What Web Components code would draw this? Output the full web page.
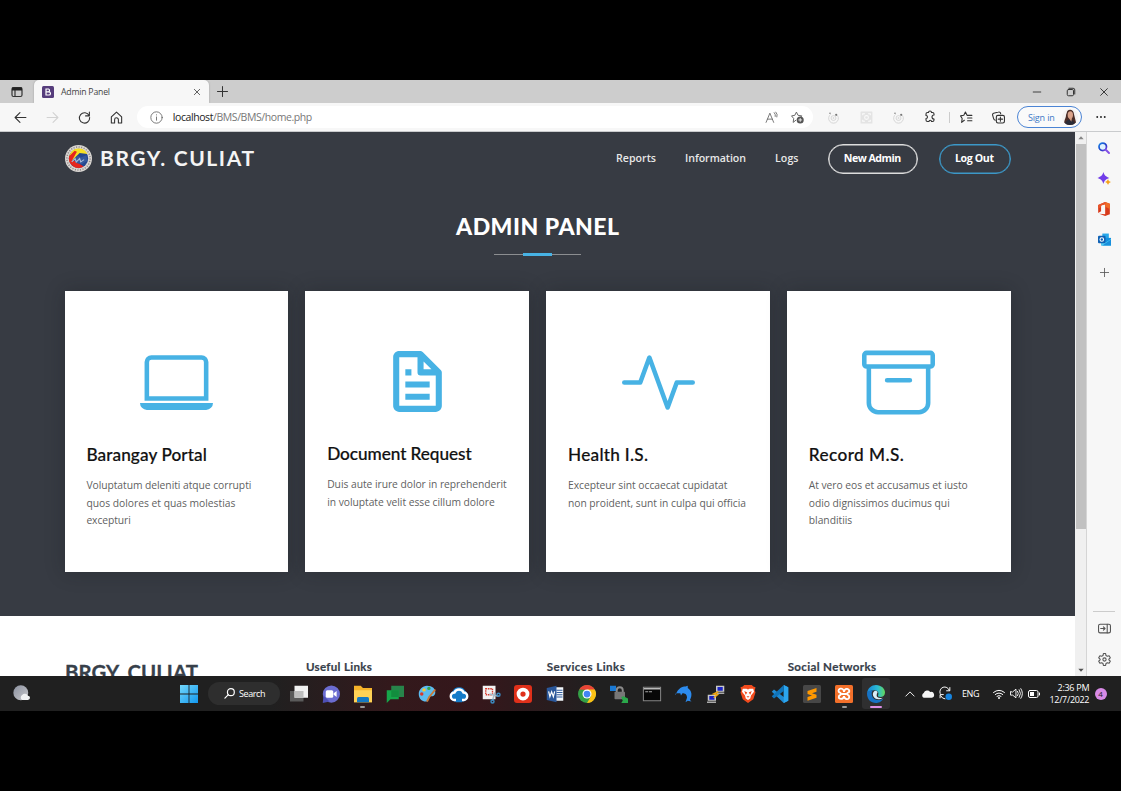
<!DOCTYPE html>
<html lang="en">
<head>
<meta charset="utf-8">
<title>Admin Panel</title>
<style>
html,body{margin:0;height:791px;overflow:hidden;background:#000}
body{font-family:"Open Sans","Noto Sans",sans-serif}
</style>
</head>
<body>
<desktop-screen></desktop-screen>
<script>
const define=(name,html,init)=>{
  const t=document.createElement('template');
  t.innerHTML=html;
  customElements.define(name,class extends HTMLElement{
    connectedCallback(){
      if(this.shadowRoot)return;
      this.attachShadow({mode:'open'}).append(t.content.cloneNode(true));
      if(init)init.call(this,this.shadowRoot);
    }
  });
};

/* One line of text tracked so that it fills the width given in "w". */
define('fit-text','<style>:host{display:block;white-space:nowrap}span{display:inline-block}</style><span><slot></slot></span>',function(root){
  const s=root.querySelector('span'),w=+this.getAttribute('w'),n=this.textContent.trim().length;
  const track=(w-s.getBoundingClientRect().width)/(n-1);
  s.style.letterSpacing=track+'px';
  s.style.marginRight=-track+'px';
});

const line=(d,w=1.5)=>`<g fill="none" stroke="currentColor" stroke-width="${w}" stroke-linecap="round" stroke-linejoin="round">${d}</g>`;
const ghost='<g fill="none" stroke="#d2d2d2" stroke-width="1.6"><path d="M7 6a9 9 0 1 0 10 0"/><circle cx="12" cy="13" r="4.5"/><circle cx="12" cy="13" r="1" /></g><g fill="#777"><circle cx="5.5" cy="4" r="1.4"/><circle cx="17" cy="7" r="2"/></g>';
const icons={
 tabs:line('<rect x="2" y="3" width="20" height="18" rx="3"/><path d="M8 9v12"/>',2.4)+'<path d="M2 3h20v6H2z" fill="#222"/>',
 boot:'<rect width="24" height="24" rx="3" fill="#563d7c"/><path d="M8 6h5a3 3 0 0 1 0 5.7H8zm0 5.7h5.8a3.1 3.1 0 0 1 0 6.3H8z" fill="none" stroke="#fff" stroke-width="2.4"/>',
 x:line('<path d="M4 4l16 16M20 4L4 20"/>',2.3),
 plus:line('<path d="M12 1v22M1 12h22"/>',2.2),
 min:line('<path d="M3 12h18"/>',2.2),
 restore:line('<rect x="3" y="6" width="15" height="15" rx="3"/><path d="M7 3h10a4 4 0 0 1 4 4v10"/>',2.4),
 back:line('<path d="M22 12H2M11 3l-9 9 9 9"/>',2),
 fwd:line('<path d="M2 12h20M13 3l9 9-9 9"/>',2),
 reload:line('<path d="M20.5 8.500A9.500 9.500 0 1 0 21.500 12M21 2v7h-7"/>',2),
 home:line('<path d="M2.500 11L12 2l9.500 9v11h-6v-6a3.500 3.500 0 0 0-7 0v6h-6z"/>',2),
 info:line('<circle cx="12" cy="12" r="10.500"/><path d="M12 11v6M12 7v.3"/>',1.600),
 read:line('<path d="M2 21L9 4l7 17M4.500 15h9M17 3q3 3 2 7M20 2q4 4 2 9"/>',1.600),
 staradd:line('<path d="M9 17l-5 4 1-7-4-5 6-1 3-6 3 6 7 1-2 2"/>',1.8)+'<circle cx="17" cy="16.500" r="6.500" fill="#555"/><path d="M17 13v7M13.500 16.500h7" stroke="#fff" stroke-width="1.500"/>',
 ghost,
 ghostbox:'<rect x="1" y="1" width="22" height="22" rx="1" fill="#e4e4e4"/><g fill="none" stroke="#fafafa" stroke-width="2"><circle cx="12" cy="12" r="3.500"/><path d="M5 8V5h4M15 5h4v3M5 16v3h4M15 19h4v-3"/></g>',
 puzzle:line('<path d="M20 8V6a3 3 0 0 0-3-3h-2a3 3 0 0 0-6 0H7a3 3 0 0 0-3 3v3a3 3 0 0 1 0 6v3a3 3 0 0 0 3 3h3a2.500 2.500 0 0 1 5 0h2a3 3 0 0 0 3-3v-2a4 4 0 1 1 0-8z"/>',2.200),
 favs:line('<path d="M8 17l-5 4 1-7-3-5 6-1 3-6 3 6h9M14 13h8M14 18h8"/>',2),
 coll:line('<rect x="8" y="8" width="15" height="14" rx="3"/><path d="M15.500 11v8M11.500 15h8M6 17a4 4 0 0 1-3-3L1 7a3 3 0 0 1 2-3l9-2a3 3 0 0 1 4 3"/>',2),
 dots:'<g fill="#222"><circle cx="3" cy="12" r="2.300"/><circle cx="12" cy="12" r="2.300"/><circle cx="21" cy="12" r="2.300"/></g>',
 avatar:'<defs><clipPath id="a"><circle cx="12" cy="12" r="12"/></clipPath></defs><g clip-path="url(#a)"><path fill="#f4f2f1" d="M0 0h24v24H0z"/><path d="M8 3c4-4 10-1 10 5l4 16H3C3 16 6 14 6 9z" fill="#4b2d27"/><ellipse cx="12.500" cy="9" rx="4" ry="5.500" fill="#dba38a"/><path d="M4 24c1-6 4-8 8-8s7 3 8 8z" fill="#2a2b36"/><path d="M10 13h5l-1 6z" fill="#d39a80"/></g>',
 search:'<defs><linearGradient id="s" x2="1" y2="1"><stop stop-color="#1c8be8"/><stop offset=".6" stop-color="#1f35c5"/><stop offset="1" stop-color="#8a4be8"/></linearGradient></defs><circle cx="9.500" cy="9.500" r="7.500" fill="#dff3ff" stroke="url(#s)" stroke-width="3.500"/><path d="M16 16l6 6" stroke="#8450e6" stroke-width="4" stroke-linecap="round"/>',
 spark:'<path d="M10 0c2 7 4 8 11 11-7 3-9 4-11 11C8 15 6 14-1 11c7-3 9-4 11-11z" fill="#713de8"/><path d="M18.500 13c1 4 2 4 5.500 5.500-3 1-4 2-5.500 5.500-1-3-2-4-5.500-5.500 3-1 4-2 5.500-5.500z" fill="#f6a21b"/>',
 office:'<path d="M14 0l8 3v18l-8 3-10-4 10 1V4L7 6v10l-5 3V5z" fill="#d83b1c"/><path d="M14 0l8 3v9l-8-4z" fill="#f06b27"/><path d="M14 0L2 5v7l5-4V6l7-2z" fill="#e8562b"/>',
 outlook:'<path d="M8 1h12v10H8z" fill="#28a8ea"/><path d="M6 9h18v14H6z" fill="#1490df"/><path d="M6 11l9 6 9-6v12H6z" fill="#50d0f5"/><path d="M24 12v11H8z" fill="#188fdc"/><rect x="0" y="5" width="14" height="14" rx="2" fill="#0f62b5"/><circle cx="7" cy="12" r="3.300" fill="none" stroke="#fff" stroke-width="2"/>',
 panel:line('<rect x="1" y="4" width="22" height="16" rx="3"/><path d="M17 4v16M5 12h8M10 9l3 3-3 3"/>',2),
 gear:line('<circle cx="12" cy="12" r="3"/><path d="M10 1h4l.8 3.700 2.400 1.300 3.300-.9 2.200 3.800-2.600 2.500v1.200l2.600 2.500-2.200 3.800-3.300-.9-2.400 1.300L14 23h-4l-.8-3.700-2.400-1.300-3.300.9-2.200-3.800 2.600-2.500v-1.200L1.300 8.900l2.200-3.800 3.300.9 2.400-1.300z"/>',2),
 weather:'<defs><linearGradient id="m" x2="1" y2="1"><stop stop-color="#8b91a0"/><stop offset="1" stop-color="#c8c8ca"/></linearGradient></defs><circle cx="11" cy="11" r="10.500" fill="url(#m)"/><path d="M13 21a4 4 0 0 1 0-7 5 5 0 0 1 8 1 3 3 0 0 1 0 6z" fill="#f1f2f3"/>',
 win:'<defs><linearGradient id="w" x2="1" y2="1"><stop stop-color="#73d8fb"/><stop offset="1" stop-color="#1297ef"/></linearGradient></defs><path d="M0 0h11.400v11.400H0zM12.600 0H24v11.400H12.600zM0 12.600h11.400V24H0zM12.600 12.600H24V24H12.600z" fill="url(#w)"/>',
 lens:line('<circle cx="15" cy="9" r="7.500"/><path d="M9.500 14.500L2 22"/>',2.600),
 task:'<path d="M0 8h18v14H0z" fill="#5a5a5a"/><path d="M6 1h18v16H6z" fill="#f1f1f1"/><path d="M6 8h12v9H6z" fill="#bdbdbd"/>',
 chat:'<circle cx="12.500" cy="12" r="11.500" fill="#6b6cd0"/><path d="M1 24l1-10 8 8z" fill="#4e50b5"/><rect x="5" y="7" width="10" height="10" rx="2" fill="#fff"/><path d="M15.500 11l4-3v8l-4-3z" fill="#fff"/>',
 folder:'<path d="M0 1h9l3 3h12v19H0z" fill="#f6b32a"/><path d="M0 7h24v16H0z" fill="#ffd256"/><path d="M4 23v-5a2 2 0 0 1 2-2h12a2 2 0 0 1 2 2v5z" fill="#1479c4"/>',
 gchat:'<path d="M7 1h17v15H7z" fill="#27844a"/><path d="M1 7h16v12H6l-5 5z" fill="#16a64a"/><path d="M7 7h10v9H7z" fill="#128d3e"/>',
 paint:'<path d="M12 1c7 0 12 4 11 10-1 5-5 4-7 4-3 0-1 4-3 6C10 24 1 21 1 12 1 6 6 1 12 1z" fill="#5dbcf0"/><circle cx="5" cy="12" r="2.300" fill="#d8392c"/><circle cx="8" cy="6.500" r="2.300" fill="#f6c832"/><circle cx="14.500" cy="4.500" r="2.200" fill="#32a64a"/><path d="M23 6l-8 10-3 6" fill="none" stroke="#c97b39" stroke-width="2.500"/>',
 cloudhome:'<path d="M6 19a5 5 0 0 1 0-9 6.500 6.500 0 0 1 12 0 5 5 0 0 1 0 9z" fill="#1683d5" stroke="#1683d5" stroke-width="6" stroke-linejoin="round"/><path d="M6 20a5 5 0 0 1 0-10 6.500 6.500 0 0 1 12 0 5 5 0 0 1 0 10z" fill="#147bc8" stroke="#fff" stroke-width="3.200"/><path d="M8 23v-6l4-3 4 3v6z" fill="#147bc8"/>',
 snip:'<rect x="1" y="1" width="17" height="18" fill="#f2f2f2"/><rect x="5" y="5" width="9" height="8" fill="none" stroke="#d7392d" stroke-width="1.800" stroke-dasharray="2 1"/><path d="M10 12l12 3M17 10l-3 11" stroke="#a9bac7" stroke-width="2"/><g fill="none" stroke="#3b89bf" stroke-width="2"><circle cx="22" cy="13" r="2"/><circle cx="14" cy="22" r="2"/></g>',
 rec:'<rect width="24" height="24" rx="4" fill="#e0301a"/><circle cx="12" cy="12" r="6" fill="none" stroke="#fff" stroke-width="5"/>',
 word:'<path d="M11 3h12v18H11z" fill="#f4f8fd"/><path d="M14 7h8M14 10h8M14 13h8M14 16h8" stroke="#2b579a" stroke-width="1.300"/><path d="M1 4l13-3v22L1 20z" fill="#2b579a"/><path d="M3.500 8.500l1.700 7L7.500 9l2.300 6.500 1.800-7" fill="none" stroke="#fff" stroke-width="1.600"/>',
 chrome:'<circle cx="12" cy="12" r="12" fill="#34a046"/><path d="M1.600 6A12 12 0 0 1 22.400 6L12 12z" fill="#ea4335"/><path d="M12 6h10.400A12 12 0 0 1 12 24l5.200-9z" fill="#fbc116"/><path d="M12 6.500L1.600 6l5.200 9z" fill="#34a046"/><circle cx="12" cy="12" r="6" fill="#fff"/><circle cx="12" cy="12" r="4.500" fill="#4285f4"/>',
 lock:'<path d="M0 1h8v7H0z" fill="#1a79d3"/><path d="M9 11V7a4 4 0 0 1 8 0v4" fill="none" stroke="#8b8b8b" stroke-width="2.500"/><rect x="6" y="9" width="14" height="10" rx="1" fill="#777"/><path d="M15 16l3-1 6 3v6h-9l2-3z" fill="#2aa84b"/>',
 term:'<rect x=".5" y="3" width="23" height="18" fill="#080808" stroke="#8a8a8a" stroke-width="1.300"/><path d="M1 4h22v2H1z" fill="#bbb"/><path d="M3 9h4M8 9h4" stroke="#bbb" stroke-width="1.200"/>',
 dolphin:'<path d="M1 13C4 4 10 2 14 2l3-1v3c6 4 6 10 3 16l2 2-5-1-3 2 2-6c0-5-3-6-6-6l-2 3-1-3c-3 0-5 0-7 1z" fill="#2c8bee"/>',
 putty:'<path d="M12 1h11v8H12zM1 13h11v8H1z" fill="#c9c9c9"/><path d="M14 2.500h7v5h-7zM3 14.500h7v5H3z" fill="#1b24c4"/><path d="M13 10h10v2H13zM0 22h12v2H0z" fill="#aaa"/><path d="M15 9l-6 3 5 1-5 4" fill="none" stroke="#f0a814" stroke-width="2"/>',
 brave:'<path d="M7 0h10l2 2 3 1-1 4 1 3-3 9-7 5-7-5-3-9 1-3-1-4 3-1z" fill="#f24b1d"/><path d="M5 5h5l2 1 2-1h5l1 4-4 5-1 4-3 2-3-2-1-4-4-5z" fill="#fff"/><path d="M7 8l4 2-2 3zM17 8l-4 2 2 3zM10 15h4l-2 2z" fill="#f24b1d"/>',
 vscode:'<path d="M17 0l6 3v18l-6 3L1 9l3-3 13 10z" fill="#1f8ad2"/><path d="M17 0l6 3v18l-6 3z" fill="#2ba5ee"/><path d="M17 8L4 18l-3-3L17 0z" fill="#0f74ba"/>',
 sublime:'<rect width="24" height="24" rx="2" fill="#474747"/><path d="M6 8l12-4v5l-6 2 6 2v4L6 21v-5l6-2-6-2z" fill="#ff9800"/>',
 xampp:'<rect width="24" height="24" rx="2" fill="#f3702a"/><path d="M12 9C11 2 3 5 5 9c2 2 3 1 3 3s-3 1-3 4 6 4 7-1c1 5 7 5 7 1s-3-2-3-4 1-1 3-3c1-4-6-6-7 0zM9 12h6" fill="none" stroke="#fff" stroke-width="2.400"/>',
 edge:'<defs><linearGradient id="e" x2="1"><stop stop-color="#1685d8"/><stop offset=".6" stop-color="#2cbdd4"/><stop offset="1" stop-color="#64d958"/></linearGradient></defs><path d="M0 11C1 4 6 0 12 0c7 0 12 5 12 10 0 4-3 6-6 6s-4-1-3-3c1-3-1-6-5-6-5 0-9 2-10 4z" fill="url(#e)"/><path d="M0 11c1-3 4-4 8-4-3 3-2 9 2 12 4 2 8 1 12-1-3 5-7 6-10 6C5 24 0 19 0 11z" fill="#1672c4"/><path d="M10 8c-3 2-3 7 1 10 4 2 7 1 10-1-6 1-9-1-8-4 0-2 1-2 1-3 0-2-2-3-4-2z" fill="#d9edf7"/>',
 up:line('<path d="M2 17L12 7l10 10"/>',2.200),
 cloud:'<path d="M5 20a5 5 0 0 1 0-9 7 7 0 0 1 12-2 5.500 5.500 0 0 1 3 11z" fill="#f5f5f5"/>',
 sync:line('<path d="M2 12A9 9 0 0 1 19 6M20 1v6h-6M2 20v-6h6M3 16q3 6 8 6"/>',1.800)+'<circle cx="18" cy="18" r="6" fill="#1684df"/>',
 wifi:line('<path d="M1 9q11-9 22 0M4.500 13q7.500-6 15 0M8 16.500q4-3 8 0"/>',2)+'<circle cx="12" cy="20" r="2" fill="#fff"/>',
 vol:line('<path d="M1 9v6h4l6 5V4L5 9zM14 8q3 4 0 8M17 5q5 7 0 14M20 3q6 9 0 18"/>',1.700),
 batt:line('<rect x="1" y="5" width="19" height="14" rx="3"/><path d="M23 10v4"/>',2)+'<path d="M4 8h8v8H4z" fill="#fff"/>',
 tri:'<path d="M4 16l8-9 8 9z" fill="#858585"/>',
 trid:'<path d="M4 8l8 9 8-9z" fill="#505050"/>',
 seal:'<circle cx="12" cy="12" r="12" fill="#d9d6d2"/><circle cx="12" cy="12" r="10.300" fill="none" stroke="#8d8587" stroke-width="1.300" stroke-dasharray="1 1.300"/><circle cx="12" cy="12" r="8.600" fill="#24468f"/><path d="M4 9a8.600 8.600 0 0 1 16-1l-7-1-6 6-3 2z" fill="#f7df23"/><path d="M3.600 10l5-5 2 1-4 7 5 3 5 3a8.600 8.600 0 0 1-13-9z" fill="#e5251d"/><path d="M8 13l3-4 3 2 5-2 1 5-5 3-5-1z" fill="#34589c"/><path d="M6 15l3-3 1 3 3-3 1 3 3-2" stroke="#a9b9d6" fill="none"/>'
};
const big={
 laptop:[16,'M13.500 3a.5.5 0 0 1 .5.5V11H2V3.500a.5.5 0 0 1 .5-.5h11zm-11-1A1.500 1.500 0 0 0 1 3.500V12h14V3.500A1.500 1.500 0 0 0 13.500 2h-11zM0 12.500h16a1.500 1.500 0 0 1-1.500 1.500h-13A1.500 1.500 0 0 1 0 12.500z'],
 file:[24,'M19.903 8.586a.997.997 0 0 0-.196-.293l-6-6a.997.997 0 0 0-.293-.196c-.03-.014-.062-.022-.094-.033a.991.991 0 0 0-.259-.051C13.04 2.011 13.021 2 13 2H6c-1.103 0-2 .897-2 2v16c0 1.103.897 2 2 2h12c1.103 0 2-.897 2-2V9c0-.021-.011-.04-.013-.062a.952.952 0 0 0-.051-.259c-.01-.032-.019-.063-.033-.093zM16.586 8H14V5.414L16.586 8zM6 20V4h6v5a1 1 0 0 0 1 1h5l.002 10H6zM8 12h8v2H8zm0 4h8v2H8zm0-8h2v2H8z'],
 pulse:[16,'M6 2a.5.5 0 0 1 .47.33L10 12.036l1.530-4.208A.5.5 0 0 1 12 7.500h3.500a.5.5 0 0 1 0 1h-3.150l-1.880 5.170a.5.5 0 0 1-.94 0L6 3.964 4.470 8.171A.5.5 0 0 1 4 8.500H.5a.5.5 0 0 1 0-1h3.150l1.880-5.170A.5.5 0 0 1 6 2Z'],
 archive:[16,'M0 2a1 1 0 0 1 1-1h14a1 1 0 0 1 1 1v2a1 1 0 0 1-1 1v7.500a2.500 2.500 0 0 1-2.500 2.500h-9A2.500 2.500 0 0 1 1 12.500V5a1 1 0 0 1-1-1V2zm2 3v7.500A1.500 1.500 0 0 0 3.500 14h9a1.500 1.500 0 0 0 1.500-1.500V5H2zm13-3H1v2h14V2zM5 7.500a.5.5 0 0 1 .5-.5h5a.5.5 0 0 1 0 1h-5a.5.5 0 0 1-.5-.5z']
};
define('ui-icon','<style>:host{display:block;flex:none}svg{display:block;overflow:visible}</style><svg></svg>',function(root){
  const n=this.getAttribute('name'),s=this.getAttribute('size')||13,svg=root.querySelector('svg'),b=big[n];
  svg.setAttribute('width',s);svg.setAttribute('height',s);
  svg.setAttribute('viewBox',b?`0 0 ${b[0]} ${b[0]}`:'0 0 24 24');
  svg.innerHTML=b?`<path fill="currentColor" fill-rule="evenodd" d="${b[1]}"/>`:icons[n];
});

define('tab-strip',`<style>
:host{display:flex;height:23px;background:#cdcdcd;align-items:stretch;color:#333}
div{display:flex;align-items:center}
.l{width:34px;justify-content:center}
.tab{width:175px;background:#f7f7f7;border-radius:5px 5px 0 0;box-sizing:border-box;padding:0 8px;box-shadow:0 0 2px #999;clip-path:inset(0 -3px 0 -3px)}
fit-text{font:8.700px/22px "Open Sans";margin-left:7px;color:#444;flex:1}
.p{width:27px;justify-content:center}.sp{flex:1}.w{width:33.500px;justify-content:center}
</style><div class="l"><ui-icon name="tabs" size="12"></ui-icon></div>
<div class="tab"><ui-icon name="boot" size="12"></ui-icon><fit-text w="49">Admin Panel</fit-text><ui-icon name="x" size="8"></ui-icon></div>
<div class="p"><ui-icon name="plus" size="11"></ui-icon></div><div class="sp"></div>
<div class="w"><ui-icon name="min" size="10"></ui-icon></div><div class="w"><ui-icon name="restore" size="10"></ui-icon></div><div class="w"><ui-icon name="x" size="10"></ui-icon></div>`);

define('tool-bar',`<style>
:host{display:flex;height:28px;background:#f7f7f7;align-items:center;color:#333;padding-left:4px;border-bottom:1px solid #c9cbcd}
div{display:flex;align-items:center;box-sizing:border-box}
.c{width:32.200px;justify-content:center;flex:none}
.pill{width:676px;height:22px;border-radius:11px;background:#fff;margin:0 5px 0 4px;padding-left:13px;color:#666;flex:none}
.url{margin-left:10px;font:10.500px/22px "Open Sans";width:140px;display:flex;color:#777}
.url b{font-weight:400;color:#222}
.r{margin-left:auto;gap:13px;padding-right:9px}
.sep{width:1px;height:11px;background:#ccc;margin:0 1px 0 2px}
.sign{width:65px;height:22px;border:1.500px solid #4b84d4;border-radius:11px;margin-left:2px;padding:0 3px 0 10px;justify-content:space-between;background:#fafafa;color:#3c78c6;font:9px "Open Sans"}
.dim{color:#d2d2d2}.d{margin-left:3px}
</style><div class="c"><ui-icon name="back" size="13"></ui-icon></div><div class="c dim"><ui-icon name="fwd" size="13"></ui-icon></div><div class="c"><ui-icon name="reload" size="13"></ui-icon></div><div class="c"><ui-icon name="home" size="13"></ui-icon></div>
<div class="pill"><ui-icon name="info" size="13"></ui-icon><div class="url"><fit-text w="139.500"><b>localhost</b>/BMS/BMS/home.php</fit-text></div><div class="r"><ui-icon name="read" size="13"></ui-icon><ui-icon name="staradd" size="13"></ui-icon></div></div>
<div class="c"><ui-icon name="ghost" size="13"></ui-icon></div><div class="c"><ui-icon name="ghostbox" size="13"></ui-icon></div><div class="c"><ui-icon name="ghost" size="13"></ui-icon></div><div class="c"><ui-icon name="puzzle" size="12"></ui-icon></div><div class="sep"></div>
<div class="c"><ui-icon name="favs" size="13"></ui-icon></div><div class="c"><ui-icon name="coll" size="13"></ui-icon></div>
<div class="sign"><fit-text w="27">Sign in</fit-text><ui-icon name="avatar" size="16"></ui-icon></div><div class="c d"><ui-icon name="dots" size="10"></ui-icon></div>`);

define('site-header',`<style>
:host{display:flex;align-items:center;height:53px;padding:0 64.500px 0 65px;color:#fff;font:600 10.600px/20px "Open Sans"}
.logo{font:700 21px/30px Lato;margin:-2px 0 0 8px;color:#f4f4f4}
ui-icon{margin-top:-1px}
nav{display:flex;align-items:center;margin-left:auto;color:#e8e8e8}
nav>fit-text{margin:-1px 29px 0 0}
.b{box-sizing:border-box;height:30px;border:1.500px solid #ddd;border-radius:15px;display:flex;align-items:center;justify-content:center;color:#fff;font-weight:700;padding-bottom:1px;box-shadow:inset 0 0 0 .5px #ddd}
.o{border-color:#3c98c8;box-shadow:inset 0 0 0 .5px #3c98c8;margin-left:21px}
</style><ui-icon name="seal" size="27"></ui-icon><fit-text class="logo" w="154">BRGY. CULIAT</fit-text>
<nav><fit-text w="40">Reports</fit-text><fit-text w="61">Information</fit-text><fit-text w="23.500">Logs</fit-text>
<div class="b" style="width:90px"><fit-text w="57.500">New Admin</fit-text></div><div class="b o" style="width:72px"><fit-text w="39">Log Out</fit-text></div></nav>`);

define('section-title',`<style>
:host{display:flex;flex-direction:column;align-items:center;height:106px;padding-top:25px}
fit-text{font:900 23px/32px Lato;color:#fff}
.r{width:87px;height:3px;margin-top:10.500px;display:flex;justify-content:center;background:linear-gradient(#8b8d90,#8b8d90) 0 1px/100% 1px no-repeat}
i{width:29px;background:#47b2e4}
</style><fit-text w="163">ADMIN PANEL</fit-text><div class="r"><i></i></div>`);

define('service-card',`<style>
:host{display:block;box-sizing:border-box;height:281px;background:#fff;padding:55px 21.700px 0;box-shadow:0 0 18px rgba(20,22,26,.3)}
ui-icon{color:#47b2e4;display:flex;justify-content:center;height:73px}
.t{font:500 17.200px/22px Lato;color:#111;-webkit-text-stroke:.2px #111;margin:25px 0 11px}
.p{font:10.300px/17.500px "Open Sans";color:#5f5f5f}
</style><ui-icon size="73"></ui-icon><div class="t"></div><div class="p"></div>`,function(root){
  const i=document.createElement('ui-icon');
  i.setAttribute('size',73);i.setAttribute('name',this.getAttribute('icon'));
  root.querySelector('ui-icon').replaceWith(i);
  const put=(box,str)=>str.split('|').forEach(l=>{const [t,w]=l.split('@');const f=document.createElement('fit-text');f.setAttribute('w',w);f.textContent=t;box.append(f)});
  put(root.querySelector('.t'),this.getAttribute('heading'));
  put(root.querySelector('.p'),this.getAttribute('lines'));
});

define('site-footer',`<style>
:host{display:grid;grid-template-columns:223.700px 223.700px 223.700px 1fr;gap:17.200px;height:60px;overflow:hidden;background:#fff;padding-left:65px;color:#37404a}
.l{font:700 20.400px/28px Lato;-webkit-text-stroke:.3px #37404a;margin-top:42px}
fit-text{font:700 11.600px/18px Lato;-webkit-text-stroke:.2px #37404a;margin-top:41.500px}
</style><fit-text class="l" w="133">BRGY. CULIAT</fit-text><fit-text w="66">Useful Links</fit-text><fit-text w="78">Services Links</fit-text><fit-text w="88.500">Social Networks</fit-text>`);

define('admin-page',`<style>
:host{display:block;width:1075px;height:544px;overflow:hidden;background:#fff}
.dark{height:484px;background:#373b43}
.cards{display:grid;grid-template-columns:repeat(4,1fr);gap:17.200px;width:946px;margin-left:64.700px;padding-top:.4px}
section-title{box-sizing:border-box}
</style><div class="dark"><site-header></site-header><section-title></section-title>
<div class="cards">
<service-card icon="laptop" heading="Barangay Portal@120.500" lines="Voluptatum deleniti atque corrupti@165|quos dolores et quas molestias@149|excepturi@44.500"></service-card>
<service-card style="padding-top:54px" icon="file" heading="Document Request@144.500" lines="Duis aute irure dolor in reprehenderit@179.500|in voluptate velit esse cillum dolore@167.500"></service-card>
<service-card icon="pulse" heading="Health I.S.@80" lines="Excepteur sint occaecat cupidatat@159.500|non proident, sunt in culpa qui officia@178"></service-card>
<service-card icon="archive" heading="Record M.S.@95" lines="At vero eos et accusamus et iusto@159|odio dignissimos ducimus qui@141|blanditiis@43.500"></service-card>
</div></div><site-footer></site-footer>`);

define('scroll-track',`<style>
:host{display:flex;flex-direction:column;width:12px;height:544px;background:#f0f0f0;box-sizing:border-box;border-right:1px solid #d5d5d5;align-items:center;justify-content:space-between}
.u{height:12px;display:flex;align-items:center}.t{width:10px;height:385px;background:#c1c1c1;margin-bottom:auto}
</style><div class="u"><ui-icon name="tri" size="8"></ui-icon></div><div class="t"></div><div class="u"><ui-icon name="trid" size="8"></ui-icon></div>`);

define('edge-sidebar',`<style>
:host{display:flex;flex-direction:column;align-items:center;width:34px;height:544px;background:#f7f7f7;color:#555}
div{height:30.700px;display:flex;align-items:center}.f{margin-top:.5px}.plus{margin-top:2px}
.s{margin-top:auto;height:1px;width:22px;background:#ccc;margin-bottom:2px}.g{margin-bottom:1px}
</style><div class="f"><ui-icon name="search" size="12"></ui-icon></div><div><ui-icon name="spark" size="13"></ui-icon></div><div><ui-icon name="office" size="14"></ui-icon></div><div><ui-icon name="outlook" size="13"></ui-icon></div><div class="plus"><ui-icon name="plus" size="9"></ui-icon></div>
<div class="s"></div><div><ui-icon name="panel" size="13"></ui-icon></div><div class="g"><ui-icon name="gear" size="13"></ui-icon></div>`);

define('task-bar',`<style>
:host{display:flex;height:35px;align-items:center;color:#fff;background:linear-gradient(90deg,#202020 270px,#33191c 390px,#35171b 480px,#202020 600px);font:9px/12px "Open Sans"}
.apps{display:grid;grid-template-columns:repeat(19,32.100px);width:610px;margin-left:-.5px;justify-items:center;height:35px}
.a{height:35px;width:28px;display:flex;align-items:center;justify-content:center;position:relative}
.run::after{content:"";position:absolute;bottom:3px;width:5px;height:2px;border-radius:1px;background:#999}
.on{background:#2f2f30;border-radius:3px;height:31px;align-self:center}
.on::after{width:12px;bottom:1px;background:#dc8fe6}
.s{box-sizing:border-box;display:flex;align-items:center;width:72px;height:23px;border-radius:12px;background:#2e2e2e;margin:0 3px 0 10px;padding-left:16px;gap:4px}
.w{margin-left:13px;width:167px}
.tray{display:flex;align-items:center;margin-left:12.500px}
.time{margin-left:10px;width:40px;display:flex;flex-direction:column;align-items:flex-end}
.n{width:12px;height:12px;border-radius:6px;background:#d88ae6;color:#222;font:8px/12px "Open Sans";text-align:center;margin-left:5px}
</style><ui-icon class="w" name="weather" size="17"></ui-icon><ui-icon name="win" size="18"></ui-icon><div class="s"><ui-icon name="lens" size="11"></ui-icon><fit-text w="26.500">Search</fit-text></div>
<div class="apps"></div>
<div class="tray"><ui-icon name="up" size="10"></ui-icon><ui-icon name="cloud" size="13" style="margin-left:6px"></ui-icon><ui-icon name="sync" size="13" style="margin-left:5px"></ui-icon><fit-text w="17.500" style="margin-left:10px">ENG</fit-text><ui-icon name="wifi" size="12" style="margin-left:13px"></ui-icon><ui-icon name="vol" size="13" style="margin-left:5px"></ui-icon><ui-icon name="batt" size="12" style="margin-left:5px"></ui-icon></div>
<div class="time"><fit-text w="32">2:36 PM</fit-text><fit-text w="40">12/7/2022</fit-text></div><div class="n">4</div>`,function(root){
  const names='task chat folder gchat paint cloudhome snip rec word chrome lock term dolphin putty brave vscode sublime xampp edge'.split(' ');
  root.querySelector('.apps').innerHTML=names.map(n=>`<div class="a${/folder|xampp|edge/.test(n)?' run':''}${n=='edge'?' on':''}"><ui-icon name="${n}" size="18"></ui-icon></div>`).join('');
});

define('desktop-screen',`<style>
:host{display:block;width:1121px;height:711px;padding-top:80px;background:#000}
.m{display:flex;height:544px}tool-bar{box-sizing:content-box}
</style><tab-strip></tab-strip><tool-bar></tool-bar><div class="m"><admin-page></admin-page><scroll-track></scroll-track><edge-sidebar></edge-sidebar></div><task-bar></task-bar>`);
</script>
</body>
</html>
